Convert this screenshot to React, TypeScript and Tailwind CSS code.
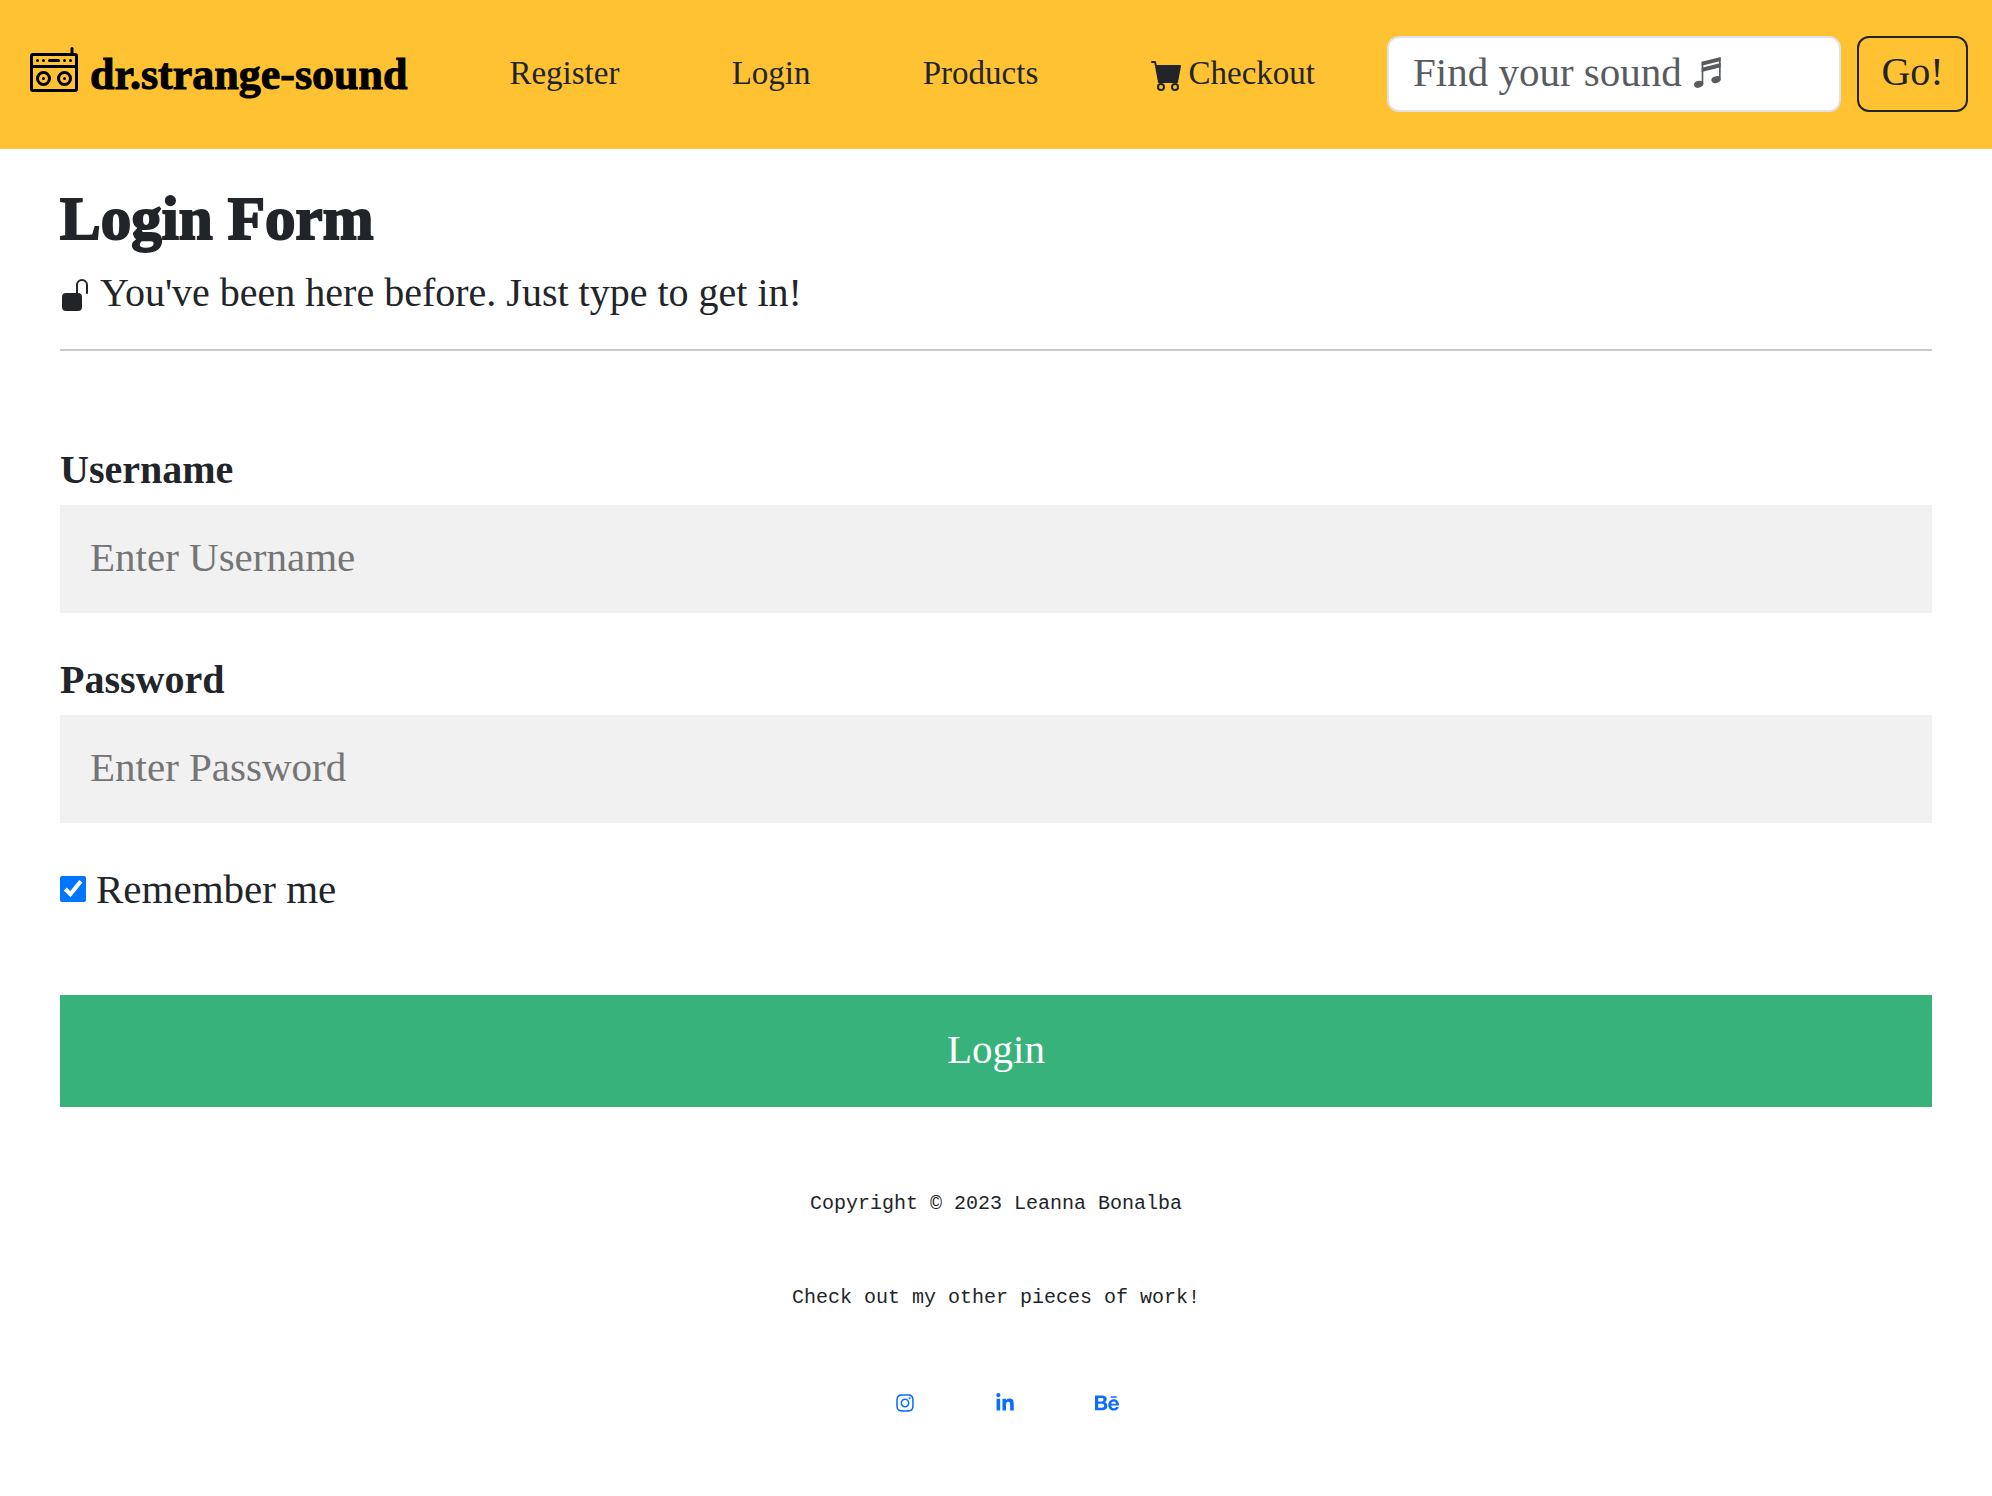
import type { ReactNode } from "react";
import { BsBoombox, BsCartFill, BsUnlockFill } from "react-icons/bs";
import { FaBehance, FaInstagram, FaLinkedinIn } from "react-icons/fa";

const navLinks: { label: string; icon?: ReactNode }[] = [
  { label: "Register" },
  { label: "Login" },
  { label: "Products" },
  { label: "Checkout", icon: <BsCartFill className="mt-1 size-8" aria-hidden /> },
];

const socialLinks = [
  { label: "Instagram", icon: <FaInstagram className="h-5 w-auto" /> },
  { label: "LinkedIn", icon: <FaLinkedinIn className="h-5 w-auto" /> },
  { label: "Behance", icon: <FaBehance className="size-6" /> },
];

function BeamedNotes({ className }: { className: string }) {
  return (
    <svg viewBox="0 0 81 93" fill="currentColor" className={className} aria-hidden>
      <ellipse cx="14" cy="82" rx="14" ry="10" transform="rotate(-15 14 82)" />
      <ellipse cx="66" cy="68" rx="14" ry="10" transform="rotate(-15 66 68)" />
      <path d="M23 14h5v68h-5zM75 2h5v66h-5z" />
      <path d="M23 14 80 0v12L23 26zM23 32l57-14v13L23 45z" />
    </svg>
  );
}

function Header() {
  return (
    <header className="flex items-center bg-[#ffc233] pt-9 pr-6 pb-[37px] pl-[30px]">
      <a href="#home" className="flex shrink-0 items-center gap-3 pt-0.5 text-[44px] leading-[74px] font-bold text-black">
        <BsBoombox className="mb-2 size-12" aria-hidden />
        <span className="[-webkit-text-stroke:1px_black]">dr.strange-sound</span>
      </a>
      <nav className="mr-[72px] ml-[102px] flex-1 pb-0.5">
        <ul className="flex items-center justify-between text-[33px] leading-[48px]">
          {navLinks.map((link) => (
            <li key={link.label}>
              <a href={`#${link.label.toLowerCase()}`} className="flex items-center gap-1.5">
                {link.icon}
                {link.label}
              </a>
            </li>
          ))}
        </ul>
      </nav>
      <form className="flex gap-4" onSubmit={(e) => e.preventDefault()}>
        <div className="relative">
          <input
            type="search"
            aria-label="Find your sound"
            placeholder="Find your sound"
            className="peer block h-[76px] w-[454px] rounded-xl border-2 border-[#dee2e6] bg-white px-6 pb-1 text-[41px] placeholder:text-[#595c5f]"
          />
          <BeamedNotes className="pointer-events-none absolute top-[21px] left-[307px] hidden h-[31px] w-[27px] text-[#595c5f] peer-placeholder-shown:block" />
        </div>
        <button
          type="submit"
          className="h-[76px] w-[111px] rounded-xl border-2 border-[#212529] pb-1 text-[40px] leading-[48px]"
        >
          Go!
        </button>
      </form>
    </header>
  );
}

function Field({ id, label, type }: { id: string; label: string; type: string }) {
  return (
    <div>
      <label htmlFor={id} className="block text-[40px] leading-[48px] font-bold">
        {label}
      </label>
      <input
        id={id}
        type={type}
        placeholder={`Enter ${label}`}
        className="mt-[11px] block h-[108px] w-full bg-[#f1f1f1] px-[30px] pb-1 text-[41px] placeholder:text-[#757575]"
      />
    </div>
  );
}

export default function App() {
  return (
    <div className="bg-white font-['Liberation_Serif',serif] text-[#212529]">
      <Header />
      <main className="px-[60px] pt-[34px]">
        <h1 className="text-[61px] leading-[72px] font-bold [-webkit-text-stroke:2px_#212529]">Login Form</h1>
        <p className="mt-2 flex items-center gap-2 text-[40px] leading-[60px]">
          <BsUnlockFill className="mt-1 size-8" aria-hidden />
          You've been here before. Just type to get in!
        </p>
        <hr className="mt-[26px] border-t-2 border-[#c8c9ca]" />
        <form className="mt-[95px]" onSubmit={(e) => e.preventDefault()}>
          <div className="flex flex-col gap-[43px]">
            <Field id="username" label="Username" type="text" />
            <Field id="password" label="Password" type="password" />
          </div>
          <label className="mt-[42px] flex items-center gap-2.5 text-[41px] leading-[48px]">
            <input type="checkbox" defaultChecked className="size-[26px] accent-[#0075ff]" />
            Remember me
          </label>
          <button type="submit" className="mt-[82px] h-28 w-full bg-[#38b27b] pb-1 text-[41px] leading-[48px] text-white">
            Login
          </button>
        </form>
      </main>
      <footer className="flex flex-col items-center pt-[82px] pb-20 text-center font-['Liberation_Mono',monospace] text-xl leading-[30px]">
        <p>Copyright © 2023 Leanna Bonalba</p>
        <p className="mt-16">Check out my other pieces of work!</p>
        <ul className="mt-[78px] flex pl-[98px] text-[#0d6efd]">
          {socialLinks.map((link) => (
            <li key={link.label} className="flex w-[100px]">
              <a href={`#${link.label.toLowerCase()}`} aria-label={link.label} className="flex h-6 items-center">
                {link.icon}
              </a>
            </li>
          ))}
        </ul>
      </footer>
    </div>
  );
}
